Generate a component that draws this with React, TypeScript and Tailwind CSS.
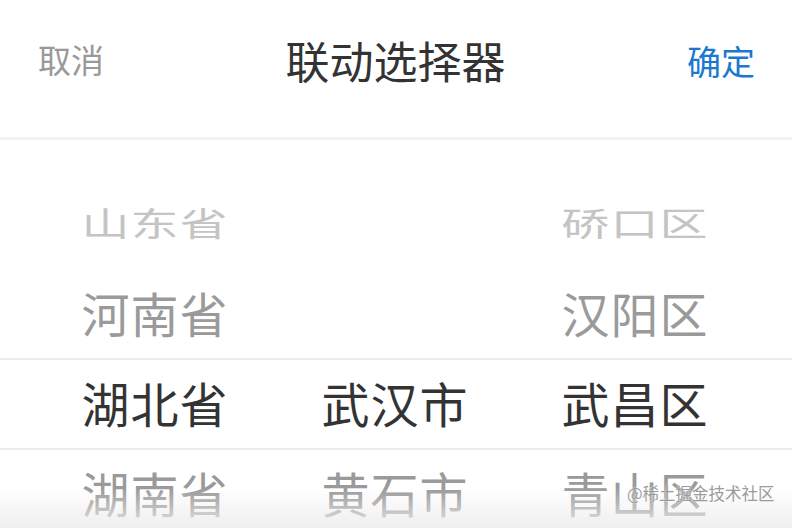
const provinces = ['山东省', '河南省', '湖北省', '湖南省'];
const cities = ['', '', '武汉市', '黄石市'];
const districts = ['硚口区', '汉阳区', '武昌区', '青山区'];

const font = "font-['Noto_Sans_CJK_SC','Noto_Sans',sans-serif]";

function Cell({ text, row }: { text: string; row: number }) {
  const tone =
    row === 0
      ? 'text-[#c4c4c4] scale-y-[0.68]'
      : row === 2
        ? 'text-[#333333]'
        : 'text-[#9a9a9a]';
  return (
    <div className="flex h-[90px] w-[240px] items-center justify-center">
      <span className={`text-[48px] leading-none tracking-[1px] ${tone}`}>{text}</span>
    </div>
  );
}

function Column({ items }: { items: string[] }) {
  return (
    <div className="flex flex-col">
      {items.map((t, i) => (
        <Cell key={i} text={t} row={i} />
      ))}
    </div>
  );
}

export default function App() {
  return (
    <div className={`relative h-[528px] w-[792px] overflow-hidden bg-white ${font}`}>
      <div className="flex h-[140px] items-center justify-between border-b-[3px] border-[#f2f2f2] pl-[38px] pr-[37px] pb-[17px]">
        <span className="text-[33px] text-[#999999]">取消</span>
        <span className="text-[44px] text-[#333333]">联动选择器</span>
        <span className="text-[34px] text-[#1a78cf]">确定</span>
      </div>

      <div className="relative pt-[37px]">
        <div className="pointer-events-none absolute left-0 right-0 top-[218px] h-[92px] border-y-2 border-[#ececec]" />
        <div className="flex pl-[35px]">
          <Column items={provinces} />
          <Column items={cities} />
          <Column items={districts} />
        </div>
      </div>

      <div className="pointer-events-none absolute bottom-0 left-0 right-0 h-[40px] bg-gradient-to-b from-white/0 to-[#ededed]/90" />
      <span className="absolute left-[627px] top-[481px] text-[16.5px] text-[#9b9b9b] [text-shadow:0_0_2px_white]">
        @稀土掘金技术社区
      </span>
    </div>
  );
}
